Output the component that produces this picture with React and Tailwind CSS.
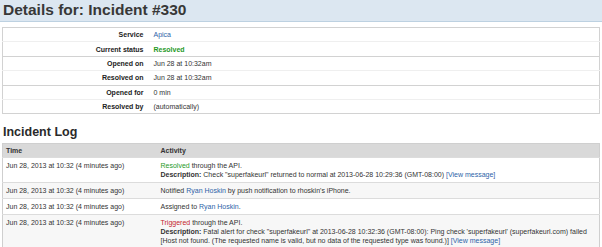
import React from "react";

const details = [
  [
    { label: "Service", value: <a className="text-[#2d63a8]">Apica</a> },
    { label: "Current status", value: <span className="font-bold text-[#1f9a1f]">Resolved</span> },
  ],
  [
    { label: "Opened on", value: "Jun 28 at 10:32am" },
    { label: "Resolved on", value: "Jun 28 at 10:32am" },
  ],
  [
    { label: "Opened for", value: "0 min" },
    { label: "Resolved by", value: "(automatically)" },
  ],
];

const Link = ({ children }) => <span className="text-[#2d63a8]">{children}</span>;

const logEntries = [
  {
    time: "Jun 28, 2013 at 10:32",
    activity: (
      <>
        <span className="text-[#1f9a1f]">Resolved</span> through the API.
        <br />
        <b>Description:</b> Check "superfakeurl" returned to normal at 2013-06-28 10:29:36 (GMT-08:00){" "}
        <Link>[View message]</Link>
      </>
    ),
  },
  {
    time: "Jun 28, 2013 at 10:32",
    activity: (
      <>
        Notified <Link>Ryan Hoskin</Link> by push notification to rhoskin's iPhone.
      </>
    ),
  },
  {
    time: "Jun 28, 2013 at 10:32",
    activity: (
      <>
        Assigned to <Link>Ryan Hoskin</Link>.
      </>
    ),
  },
  {
    time: "Jun 28, 2013 at 10:32",
    activity: (
      <>
        <span className="text-[#c4262e]">Triggered</span> through the API.
        <br />
        <b>Description:</b> Fatal alert for check "superfakeurl" at 2013-06-28 10:32:36 (GMT-08:00): Ping check
        'superfakeurl' (superfakeurl.com) failed
        <br />
        [Host not found. (The requested name is valid, but no data of the requested type was found.)]{" "}
        <Link>[View message]</Link>
      </>
    ),
  },
];

export default function App() {
  return (
    <div className="w-[602px] h-[247px] overflow-hidden bg-white text-[#333333] font-['Liberation_Sans',Arial,sans-serif]">
      {/* page title */}
      <div className="h-[22px] bg-[#dce7f1] border-b border-[#bdd1e1] px-[3px]">
        <h1 className="text-[15.5px] leading-[20px] font-bold text-[#383838]">Details for: Incident #330</h1>
      </div>

      {/* incident details */}
      <table className="mx-[2px] mt-[5px] w-[598px] border-collapse border border-[#d2d2d2] text-[7px]">
        {details.map((group, gi) => (
          <tbody key={gi}>
            {group.map((row, ri) => (
              <tr key={row.label} className={ri === 0 ? "border-t border-[#d2d2d2]" : "border-t border-[#efefef]"}>
                <td className="w-[146px] pr-[5px] py-[2.2px] leading-[9px] text-right font-bold text-[#222222]">
                  {row.label}
                </td>
                <td className="pl-[5px] py-[2.2px] leading-[9px] text-[#333333]">{row.value}</td>
              </tr>
            ))}
          </tbody>
        ))}
      </table>

      <h2 className="mt-[10.5px] mb-[4.5px] px-[3px] text-[12.5px] leading-[14px] font-bold text-[#2a2a2a]">
        Incident Log
      </h2>

      {/* log table */}
      <table className="mx-[2px] w-[598px] border-collapse border border-[#cfcfcf] text-[7px] text-[#333333]">
        <thead>
          <tr className="bg-[#d9d9d9]">
            <th className="w-[155px] px-[3px] h-[14px] leading-[9px] text-left font-bold">Time</th>
            <th className="px-[3px] h-[14px] leading-[9px] text-left font-bold">Activity</th>
          </tr>
        </thead>
        <tbody>
          {logEntries.map((entry, i) => (
            <tr key={i} className={`border-t border-[#dcdcdc] ${i % 2 === 1 ? "bg-[#f7f7f7]" : "bg-white"}`}>
              <td className="px-[3px] pt-[3px] pb-[2.5px] leading-[9.2px] align-top whitespace-nowrap">
                {entry.time} (4 minutes ago)
              </td>
              <td className="px-[3px] pt-[3px] pb-[2.5px] leading-[9.2px] align-top whitespace-nowrap">
                {entry.activity}
              </td>
            </tr>
          ))}
        </tbody>
      </table>
    </div>
  );
}
